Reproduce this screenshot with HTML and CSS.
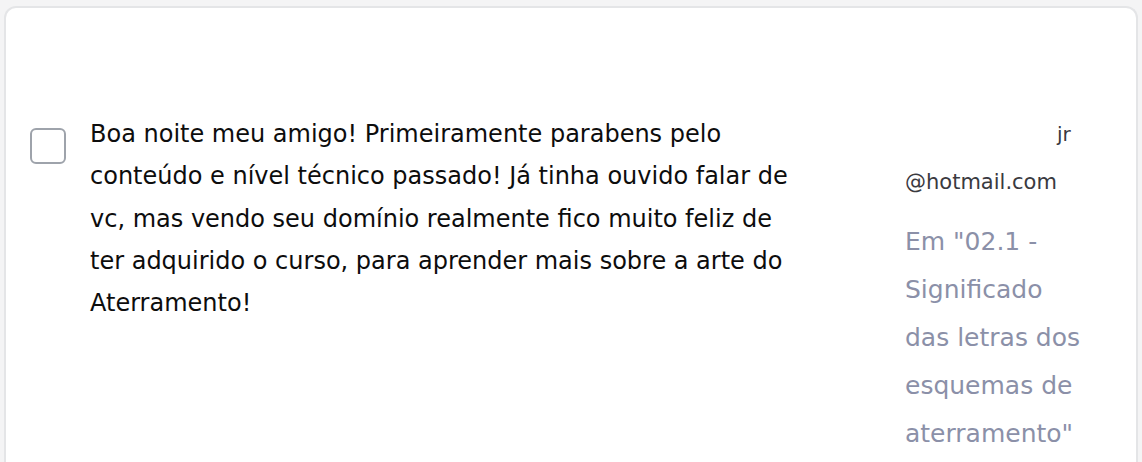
FILE: index.html
```html
<!DOCTYPE html>
<html lang="pt-BR">
<head>
<meta charset="utf-8">
<link rel="stylesheet" href="styles.css">
<title>Comentário</title>
</head>
<body>
<div class="card">
  <div class="row">
    <div class="check"></div>
    <p class="message">Boa noite meu amigo! Primeiramente parabens pelo conteúdo e nível técnico passado! Já tinha ouvido falar de vc, mas vendo seu domínio realmente fico muito feliz de ter adquirido o curso, para aprender mais sobre a arte do Aterramento!</p>
    <div class="meta">
      <div class="name">jr</div>
      <div class="email">@hotmail.com</div>
      <div class="lesson">Em "02.1 - Significado das letras dos esquemas de aterramento"</div>
    </div>
  </div>
</div>
</body>
</html>
```

FILE: styles.css
```css
html, body {
  margin: 0;
  padding: 0;
  background: #f4f4f5;
  height: 462px;
  overflow: hidden;
}

body {
  font-family: "DejaVu Sans", "Open Sans", sans-serif;
  padding: 6px 4px 0 4px;
}

.card {
  background: #ffffff;
  border: 2px solid #e4e5e7;
  border-bottom: none;
  border-radius: 12px 12px 0 0;
  height: 600px;
  box-sizing: border-box;
}

.row {
  display: flex;
  align-items: flex-start;
  padding: 102px 0 0 24px;
}

.check {
  flex: none;
  width: 36px;
  height: 36px;
  box-sizing: border-box;
  border: 2px solid #9ea3ab;
  border-radius: 6px;
  margin-top: 18px;
  margin-right: 24px;
}

.message {
  flex: none;
  width: 712px;
  margin: 3px 0 0 0;
  font-size: 24px;
  line-height: 42.25px;
  color: #0d0d0d;
}

.meta {
  flex: none;
  width: 190px;
  margin-left: 103px;
}

.name {
  font-size: 20px;
  line-height: 48px;
  color: #3a3a3f;
  padding-left: 152px;
}

.email {
  font-size: 21px;
  line-height: 48px;
  color: #3a3a3f;
}

.lesson {
  margin-top: 12px;
  font-size: 25px;
  line-height: 48px;
  color: #8b90a8;
  width: 182px;
}
```
